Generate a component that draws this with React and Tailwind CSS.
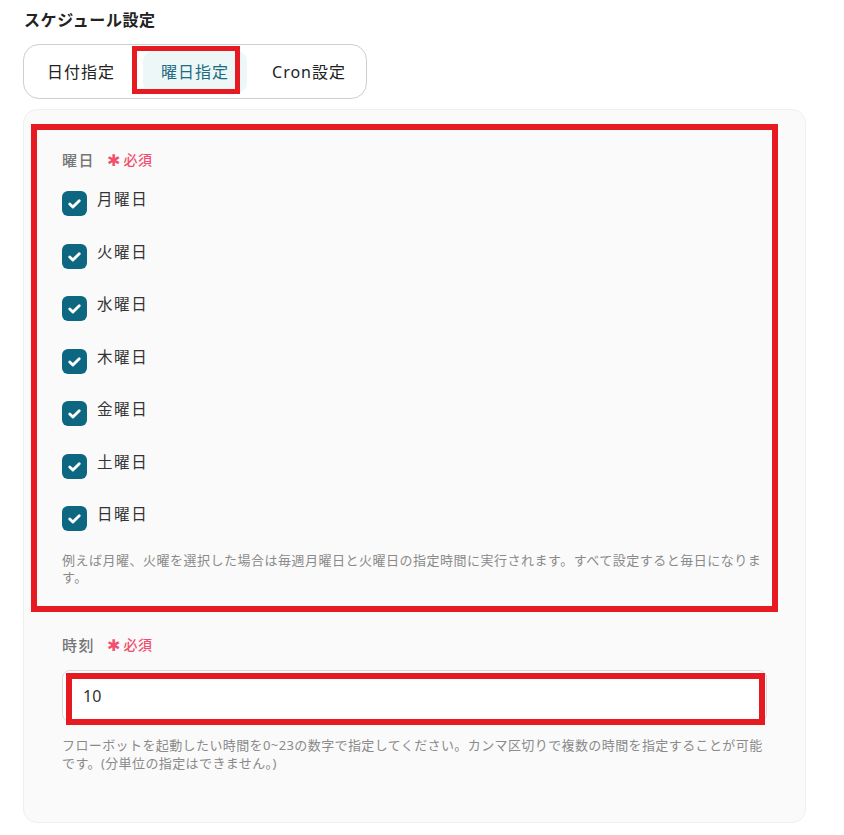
import React, { useState } from 'react';

const days = ['月曜日', '火曜日', '水曜日', '木曜日', '金曜日', '土曜日', '日曜日'];

const font = { fontFamily: '"Noto Sans", "Noto Sans CJK JP", sans-serif' };

const Required = () => (
    <span className="ml-3 flex items-center text-[14px] font-medium text-[#f0506e] tracking-[0.5px]">
        <span className="mr-[3px] text-[16px] font-normal leading-none">✱</span>必須
    </span>
);

const Check = () => (
    <span className="flex h-[25px] w-[25px] shrink-0 items-center justify-center rounded-[6px] bg-[#0e6781]">
        <svg viewBox="0 0 24 24" className="h-[19px] w-[19px]" fill="none" stroke="white" strokeWidth="3.6" strokeLinecap="round" strokeLinejoin="round">
            <path d="M6 12.5l4 4L18 8.5" />
        </svg>
    </span>
);

const App = () => {
    const [tab, setTab] = useState('weekday');
    const [hour, setHour] = useState('10');

    const tabs = [
        { id: 'date', label: '日付指定' },
        { id: 'weekday', label: '曜日指定' },
        { id: 'cron', label: 'Cron設定' },
    ];

    return (
        <div className="relative h-[835px] w-[844px] overflow-hidden bg-white pl-[23px]" style={font}>
            <h2 className="pl-px pt-2 text-[16px] font-bold leading-6 tracking-[0.6px] text-[#222]">
                スケジュール設定
            </h2>

            {/* tabs */}
            <div className="mt-3 flex h-[55px] w-[344px] items-center gap-[10px] rounded-2xl border border-[#cfcfcf] px-[5px]">
                {tabs.map(t => (
                    <button
                        key={t.id}
                        onClick={() => setTab(t.id)}
                        className={
                            tab === t.id
                                ? 'h-[42px] w-[104px] rounded-[10px] bg-[#eef7f7] text-[16px] tracking-[1px] text-[#1d6b82]'
                                : 'h-[42px] w-[104px] rounded-[10px] text-[16px] tracking-[1px] text-[#222]'
                        }
                    >
                        {t.label}
                    </button>
                ))}
            </div>

            {/* panel */}
            <div className="mt-[10px] h-[714px] w-[783px] rounded-[14px] border border-[#efefef] bg-[#fafafa] pl-[38px] pt-10">
                <div className="w-[712px]">
                    <div className="flex items-center leading-5">
                        <span className="text-[15px] font-medium tracking-[1.5px] text-[#757575]">曜日</span>
                        <Required />
                    </div>

                    <div className="mt-[21px] flex flex-col gap-[27.5px]">
                        {days.map(d => (
                            <label key={d} className="flex items-start gap-[10px]">
                                <Check />
                                <span className="-mt-[2px] text-[15.5px] leading-5 tracking-[1.6px] text-[#333]">{d}</span>
                            </label>
                        ))}
                    </div>

                    <p className="mt-[21px] whitespace-nowrap text-[13px] leading-[17px] tracking-[0.5px] text-[#8a8a8a]">
                        例えば月曜、火曜を選択した場合は毎週月曜日と火曜日の指定時間に実行されます。すべて設定すると毎日になりま
                        <br />
                        す。
                    </p>

                    <div className="mt-[49px] flex items-center leading-5">
                        <span className="text-[15px] font-medium tracking-[1.5px] text-[#757575]">時刻</span>
                        <Required />
                    </div>

                    <input
                        value={hour}
                        onChange={e => setHour(e.target.value)}
                        className="mt-[15px] h-[52px] w-[705px] rounded-lg border border-[#dadada] bg-white px-5 text-[16px] text-[#333] outline-none"
                    />

                    <p className="mt-[15px] whitespace-nowrap text-[13px] leading-[17.5px] tracking-[0.4px] text-[#8a8a8a]">
                        フローボットを起動したい時間を0~23の数字で指定してください。カンマ区切りで複数の時間を指定することが可能
                        <br />
                        です。(分単位の指定はできません。)
                    </p>
                </div>
            </div>

            {/* annotation boxes */}
            <div className="pointer-events-none absolute left-[132px] top-[46px] h-[48px] w-[108px] border-[5px] border-[#e61b22]" />
            <div className="pointer-events-none absolute left-[31px] top-[124px] h-[488px] w-[747px] border-[6px] border-[#e61b22]" />
            <div className="pointer-events-none absolute left-[66px] top-[673px] h-[52px] w-[699px] border-[6px] border-[#e61b22]" />
        </div>
    );
};

export default App;
